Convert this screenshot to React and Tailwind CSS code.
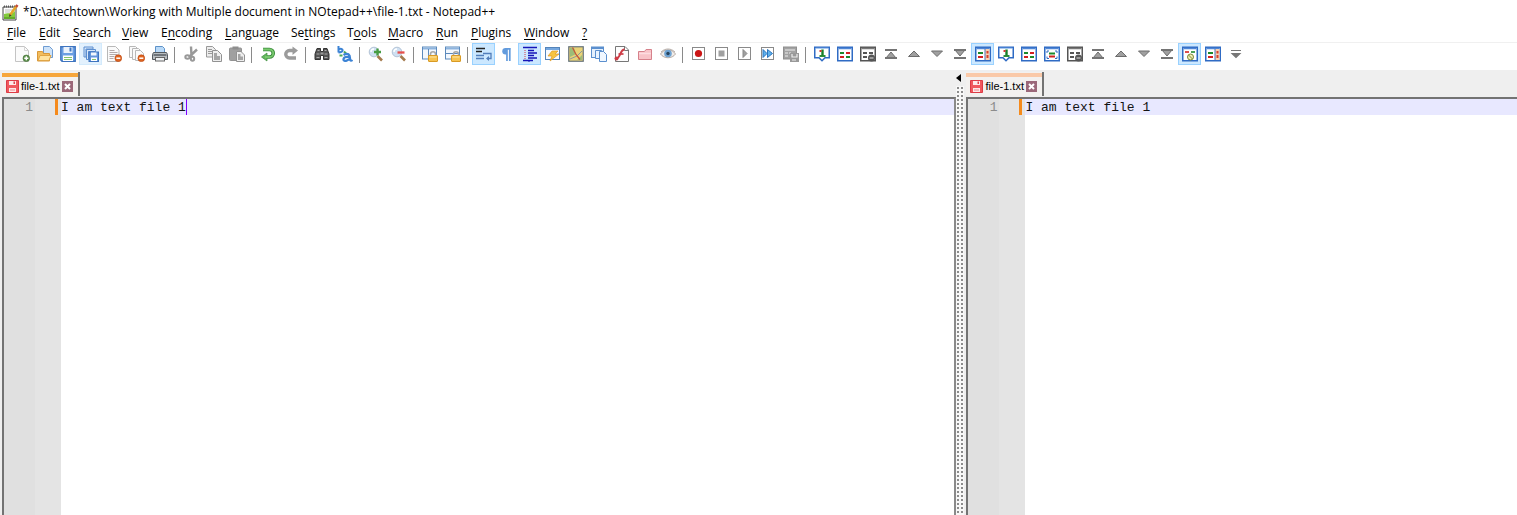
import React from "react";

const Svg = ({ children, size = "size-4" }) => (
  <svg viewBox="0 0 16 16" className={`${size} shrink-0`} aria-hidden="true" fill="none">
    {children}
  </svg>
);

const Minus = () => (
  <>
    <circle cx="12.3" cy="12.2" r="3.4" fill="#df6420" stroke="#b9440f" strokeWidth=".6" />
    <path d="M10.3 12.2h4" stroke="#fff" strokeWidth="1.5" />
  </>
);
const Padlock = () => (
  <>
    <path d="M8.5 10V8.300a2.500 2.500 0 0 1 5 0V10" stroke="#a8a8a8" strokeWidth="1.500" />
    <rect x="6.500" y="9.500" width="9" height="6" rx=".5" fill="#f6c352" stroke="#d99a24" />
    <path d="M7.500 11h7" stroke="#fde6a4" />
  </>
);
const Lens = () => (
  <>
    <path d="M9.500 10l4.500 4.500" stroke="#a57b4e" strokeWidth="2.600" />
    <circle cx="6" cy="6" r="4.800" fill="#cfe0f2" stroke="#b3c3d6" />
    <path d="M3 6a3 3 0 0 1 3-3" stroke="#fff" strokeWidth="1.400" />
  </>
);
const Frame = ({ c = "#2f6bc4", top = "#4f86d6" }) => (
  <>
    <rect x=".75" y="1.250" width="14.500" height="13.500" fill="#fff" stroke={c} strokeWidth="1.500" />
    <path d="M1.500 2.500h13" stroke={top} strokeWidth="1.500" />
  </>
);
const Bars = ({ a = "#1c8a2c", b = "#d32020" }) => (
  <>
    <path d="M3 7h4M9 11h4" stroke={a} strokeWidth="2" />
    <path d="M9 7h4M3 11h4" stroke={b} strokeWidth="2" />
  </>
);
const MediaBox = ({ children }) => (
  <>
    <rect x="1.500" y="1.500" width="12" height="12" fill="#fff" stroke="#8a8a8a" />
    {children}
  </>
);
const Tri = ({ d, line }) => (
  <>
    <path d={d} fill="#a0a0a0" stroke="#6c6c6c" strokeWidth="1" />
    {line && <path d={line} stroke="#747474" strokeWidth="2" />}
  </>
);
const Bookmark = () => (
  <>
    <path d="M.75 1.250h14.500v10.500H11L8 14.800 5 11.750H.75z" fill="#fff" stroke="#2f6bc4" strokeWidth="1.500" />
    <path d="M1.500 2h13" stroke="#5b93de" />
    <path d="M8.500 3.500v6" stroke="#16802a" strokeWidth="2.400" />
    <path d="M5.500 10h6" stroke="#16802a" strokeWidth="1.800" />
    <path d="M5.500 5h2" stroke="#d32020" strokeWidth="1.800" />
  </>
);

const icons = {
  new: (
    <>
      <path d="M1.500.5h9l4 4v11h-13z" fill="#fbfbfb" stroke="#c4c4c4" />
      <path d="M10.500.5v4h4" stroke="#d5d5d5" />
      <circle cx="12.300" cy="12.300" r="3.300" fill="#5c8f4b" stroke="#3f6e33" strokeWidth=".6" />
      <path d="M12.300 10.300v4M10.300 12.300h4" stroke="#fff" strokeWidth="1.400" />
    </>
  ),
  open: (
    <>
      <path d="M6.500.5h6l3 3v8h-9z" fill="#cfe3f8" stroke="#6d9bd2" />
      <path d="M.5 5.500h5l1 2h6v7.500H.5z" fill="#f2bd5e" stroke="#d99838" />
      <path d="M1 14.500l2-5h11l-2 5z" fill="#ffe3a0" stroke="#e0a545" />
    </>
  ),
  save: (
    <>
      <path d="M.75.75h14.500v14.500H2L.75 14z" fill="#6b9fe2" stroke="#3e74bf" strokeWidth="1.300" />
      <rect x="3.500" y="1" width="9" height="6" fill="#eaf2fc" />
      <rect x="9.500" y="1.500" width="2" height="4" fill="#4077c2" />
      <rect x="3" y="9.500" width="10" height="5.500" fill="#fff" />
      <path d="M4 11.500h8M4 13.500h8" stroke="#85c46c" />
    </>
  ),
  saveAll: (
    <>
      <path d="M1 1h9v2H3v8H1z" fill="#d7e7fa" stroke="#5d8fd0" />
      <path d="M3.500 3.500h9v2h-7v8h-2z" fill="#d7e7fa" stroke="#5d8fd0" />
      <rect x="6" y="6" width="9.500" height="9.500" fill="#6496dc" stroke="#3e74bf" />
      <rect x="8" y="6.500" width="5.500" height="3" fill="#f2f7fd" />
      <rect x="8" y="11.500" width="6" height="3.500" fill="#fff" />
      <path d="M9 13.500h4" stroke="#85c46c" />
    </>
  ),
  close: (
    <>
      <path d="M1.500.5h8l3.500 3.500v11.500H1.500z" fill="#fafafa" stroke="#b8b8b8" />
      <path d="M3.500 4.500h5M3.500 6.500h8M3.500 8.500h8M3.500 10.500h5M3.500 12.500h4" stroke="#b4a9a9" />
      <Minus />
    </>
  ),
  closeAll: (
    <>
      <path d="M.5.500h6l2 2v9h-8z" fill="#fafafa" stroke="#b8b8b8" />
      <path d="M3.500 2.500h6l2 2v9h-8z" fill="#fafafa" stroke="#b8b8b8" />
      <path d="M6.500 4.500h5l3 3v7h-8z" fill="#fafafa" stroke="#b8b8b8" />
      <Minus />
    </>
  ),
  print: (
    <>
      <path d="M3.500 7V.5h7l2 2V7" fill="#b9d9f7" stroke="#5e92c8" />
      <path d="M1.500 6.500h13l1 2v5H.5v-5z" fill="#b9bec2" stroke="#555b61" />
      <path d="M1.500 9h13" stroke="#575d63" strokeWidth="1.500" />
      <rect x="3.500" y="11.500" width="9" height="3.500" fill="#f1f4f6" stroke="#666" />
    </>
  ),
  cut: (
    <>
      <path d="M8 .5L8.500 10M14 3.500L6 11" stroke="#999" strokeWidth="2.400" />
      <ellipse cx="4.500" cy="11" rx="2.200" ry="1.700" stroke="#999" strokeWidth="2" />
      <ellipse cx="9.500" cy="12.800" rx="1.700" ry="2" stroke="#999" strokeWidth="2" />
    </>
  ),
  copy: (
    <>
      <path d="M.5.500h6l3 3v7.500h-9z" fill="#ededed" stroke="#999" />
      <path d="M2 3.500h4M2 5.500h5M2 7.500h5" stroke="#999" />
      <path d="M6.500 4.500h5l4 4v7h-9z" fill="#eee" stroke="#929292" />
      <path d="M8 7h3v3h3v4H8z" fill="#a4a4a4" />
    </>
  ),
  paste: (
    <>
      <rect x=".5" y="2" width="12" height="12.500" rx="1" fill="#a0a0a0" stroke="#929292" />
      <rect x="3.500" y=".5" width="6" height="3" fill="#8e8e8e" />
      <path d="M7.500 5.500h4.500l3.500 3.500v6.500h-8z" fill="#eee" stroke="#929292" />
      <path d="M9 8h2.500v2.500H14V14H9z" fill="#a4a4a4" />
    </>
  ),
  undo: (
    <>
      <path d="M3 3.500h6.500a3.600 3.600 0 0 1 0 7.500H6" stroke="#3c8d3d" strokeWidth="3.600" />
      <path d="M7 7v8L1.500 11z" fill="#64b85d" stroke="#3c8d3d" strokeWidth=".7" />
      <path d="M3 3.500h6.500a3.600 3.600 0 0 1 0 7.500H5" stroke="#79c86e" strokeWidth="1.800" />
    </>
  ),
  redo: (
    <>
      <path d="M11 4.500H6.500a3.700 3.700 0 0 0 0 7.500H13" stroke="#9b9b9b" strokeWidth="3.400" />
      <path d="M9.500.5v8.500l5.500-4.500z" fill="#9b9b9b" />
    </>
  ),
  find: (
    <>
      <path d="M3 2.500h3.500v3h3v-3H13l2 5.500v5.500H9.500V9.500h-3v4H1V8z" fill="#555" stroke="#333" />
      <path d="M3.500 4.500h2M10.500 4.500h2M2.500 8h3M10.500 8h3M2.500 11.500h3M10.500 11.500h3" stroke="#aaa" strokeWidth="1.200" />
      <path d="M6.500 7.500h3" stroke="#999" strokeWidth="2" />
    </>
  ),
  replace: (
    <>
      <path d="M1.500 0v6.500M1.500 3.500c5-2.500 6 3 0 3" stroke="#3c83d5" strokeWidth="2" />
      <path d="M2.500 9.500l3 0M7 5.500l3 3" stroke="#4ba757" strokeWidth="2" />
      <path d="M6.500 9c4-2.500 7-1 6.500 4.500 0 1.500 1.500 1.500 2.500.5M12.500 11c-8-1-7 5-3 3.800l3-1.800" stroke="#3c83d5" strokeWidth="2.200" />
    </>
  ),
  zoomIn: (
    <>
      <Lens />
      <path d="M9.500 2.500v7M6 6h7" stroke="#479c43" strokeWidth="2.300" />
    </>
  ),
  zoomOut: (
    <>
      <Lens />
      <path d="M6.500 6.500h7" stroke="#e6504c" strokeWidth="2.300" />
    </>
  ),
  syncV: (
    <>
      <rect x=".5" y="1" width="14" height="12" fill="#f3f8fe" stroke="#5b89bb" />
      <path d="M1 2.500h13" stroke="#8eb4de" strokeWidth="2" />
      <path d="M6.500 3v10" stroke="#5b89bb" />
      <Padlock />
    </>
  ),
  syncH: (
    <>
      <rect x=".5" y="1" width="14" height="12" fill="#f3f8fe" stroke="#5b89bb" />
      <path d="M1 2.500h13" stroke="#8eb4de" strokeWidth="2" />
      <path d="M1 7.500h13" stroke="#5b89bb" />
      <Padlock />
    </>
  ),
  wrap: (
    <>
      <path d="M0 2.500h9M0 5.500h6" stroke="#222" strokeWidth="1.300" />
      <path d="M7 7.500h8v5h-4" stroke="#527ebb" strokeWidth="1.300" />
      <path d="M13 10v5l-3-2.500z" fill="#527ebb" />
      <path d="M0 9.500h8M0 12.500h8" stroke="#527ebb" strokeWidth="1.500" />
    </>
  ),
  pilcrow: (
    <>
      <path d="M12.500 2H7M8.500 2v13M11.500 2v13" stroke="#629bdd" strokeWidth="1.800" />
      <path d="M8.500 1H7a3.500 3.500 0 0 0 0 7h1.500z" fill="#629bdd" />
    </>
  ),
  indent: (
    <>
      <path d="M1 1.500h14M6 4.500h6M6 7h9M6 9.500h6M6 12h9M1 14.500h10" stroke="#1414b8" strokeWidth="1.500" />
      <path d="M3 4v10" stroke="#d23a4c" strokeDasharray="1 1" />
      <path d="M7 14v2" stroke="#1414b8" />
    </>
  ),
  lang: (
    <>
      <rect x=".5" y="1.500" width="14" height="12" fill="#f8fbff" stroke="#5484ba" />
      <path d="M1 3h13" stroke="#76a7de" strokeWidth="2" />
      <path d="M7 5h6l-3 3h4l-9 7 2-5H3z" fill="#f7c441" stroke="#e09b26" strokeWidth=".7" />
    </>
  ),
  map: (
    <>
      <rect x=".75" y=".75" width="14.500" height="14.500" fill="#ead377" stroke="#66737c" strokeWidth="1.200" />
      <path d="M2 2h4l2 6-6 3zM9 14l5-5v5z" fill="#9dbd78" />
      <path d="M2 13l7-3 5-5" stroke="#8b999c" />
      <path d="M4.500 1.500l3.500 7 4 5" stroke="#c65738" strokeWidth="1.300" />
    </>
  ),
  docList: (
    <>
      <rect x=".5" y="1" width="12" height="10.500" fill="#e5f0fc" stroke="#5b8fce" />
      <path d="M1 2h11" stroke="#5b8fce" strokeWidth="2" />
      <path d="M4.500 4.500h6v8h-6z" fill="#e8f3ff" stroke="#5b8fce" />
      <path d="M8.500 5.500h4l3 3v7h-7z" fill="#f0f7ff" stroke="#5b8fce" />
    </>
  ),
  func: (
    <>
      <path d="M1.500.5H11L14.500 4v11.500h-13z" fill="#fdfdfd" stroke="#777" />
      <path d="M10.500.5v4h4" stroke="#777" />
      <path d="M10.500 3.500C6 3 7 12 2 13" stroke="#ce3b45" strokeWidth="2" />
      <path d="M4.500 8h5" stroke="#ce3b45" strokeWidth="1.700" />
      <circle cx="2.500" cy="12.500" r="2" fill="#ce3b45" />
    </>
  ),
  folder: (
    <>
      <path d="M1.500 13.500v-8h6l1.500-2h5.500v10z" fill="#f8c3c8" stroke="#d6818b" />
      <path d="M2 7.500h12" stroke="#fddce0" strokeWidth="1.500" />
    </>
  ),
  eye: (
    <>
      <path d="M.5 8C4 2.500 12 2.500 15.500 8 12 13 4 13 .5 8z" fill="#f1ece8" stroke="#b5aaa3" />
      <circle cx="8" cy="7.500" r="3.800" fill="#6fa3d2" />
      <circle cx="8" cy="7.500" r="1.700" fill="#27435c" />
      <path d="M1 6c4-4 10-4 14 0" stroke="#b9b0aa" />
    </>
  ),
  record: <MediaBox><circle cx="7.500" cy="7.500" r="3.600" fill="#cb1515" /></MediaBox>,
  stop: <MediaBox><rect x="4.500" y="4.500" width="6" height="6" fill="#a0a0a0" /></MediaBox>,
  play: <MediaBox><path d="M6 3.500v8l4-4z" fill="#a0a0a0" stroke="#888" /></MediaBox>,
  fast: <MediaBox><path d="M3 3.500v8l4-4zM7.500 3.500v8l5-4z" fill="#5eb2ed" stroke="#2c74bd" /></MediaBox>,
  saveMacro: (
    <>
      <rect x=".5" y="1" width="13" height="12" fill="#a3a3a3" stroke="#8f8f8f" />
      <path d="M2 4h10M2 7h3m1 0h2M2 10h3" stroke="#eee" strokeWidth="1.200" />
      <rect x="7" y="7" width="9" height="9" fill="#999" />
      <path d="M9 8v3h5V8M9 14h4" stroke="#eee" strokeWidth="1.200" />
    </>
  ),
  bookmark: <Bookmark />,
  diff: <><Frame /><Bars /></>,
  diffGray: (
    <>
      <Frame c="#555" top="#777" />
      <Bars a="#555" b="#555" />
      <circle cx="11.500" cy="12" r="3.500" fill="#555" />
      <path d="M9.500 12h4" stroke="#ccc" strokeWidth="1.200" />
    </>
  ),
  first: <Tri d="M3 12h10L8 6z" line="M2 4h12M2 12h12" />,
  prev: <Tri d="M2.500 10.500h11L8 5z" />,
  next: <Tri d="M2.500 5h11L8 10.500z" />,
  last: <Tri d="M3 4h10L8 10z" line="M2 4h12M2 12h12" />,
  nav: (
    <>
      <Frame />
      <path d="M3 7h5" stroke="#1c8a2c" strokeWidth="2" />
      <path d="M3 11h5" stroke="#d32020" strokeWidth="2" />
      <rect x="10" y="3" width="4.500" height="11" fill="#f7d0b0" />
      <path d="M10 3v11" stroke="#4a78bb" />
      <path d="M12.500 5v2.500M12.500 9v3" stroke="#d6432d" strokeWidth="2" />
    </>
  ),
  capture: (
    <>
      <Frame />
      <path d="M5 5H3v2M11 5h2v2M5 12.500H3v-2M11 12.500h2v-2" stroke="#2f6bc4" />
      <path d="M5 7.500h6" stroke="#1c8a2c" strokeWidth="2" />
      <path d="M5 10.500h6" stroke="#d32020" strokeWidth="2" />
    </>
  ),
  ignore: (
    <>
      <Frame />
      <path d="M3 6h4" stroke="#d32020" strokeWidth="1.600" />
      <path d="M9 6h4" stroke="#1c8a2c" strokeWidth="1.600" />
      <circle cx="8.500" cy="11" r="3" fill="#f0edb5" stroke="#7d8b36" />
      <path d="M6.500 9l4 4" stroke="#7d8b36" />
    </>
  ),
  chevron: <path d="M3 4.500h10M4 7.500h8l-4 4z" fill="#777" stroke="#777" strokeWidth="1.200" />,
};

const groups = [
  [["new", "New"], ["open", "Open"], ["save", "Save"], ["saveAll", "Save All", "hover"], ["close", "Close"], ["closeAll", "Close All"], ["print", "Print"]],
  [["cut", "Cut"], ["copy", "Copy"], ["paste", "Paste"]],
  [["undo", "Undo"], ["redo", "Redo"]],
  [["find", "Find"], ["replace", "Replace"]],
  [["zoomIn", "Zoom In"], ["zoomOut", "Zoom Out"]],
  [["syncV", "Synchronize Vertical Scrolling"], ["syncH", "Synchronize Horizontal Scrolling"]],
  [["wrap", "Word wrap", "on"], ["pilcrow", "Show All Characters"], ["indent", "Show Indent Guide", "on"], ["lang", "Define your language"], ["map", "Document Map"], ["docList", "Document List"], ["func", "Function List"], ["folder", "Folder as Workspace"], ["eye", "Monitoring"]],
  [["record", "Start Recording"], ["stop", "Stop Recording"], ["play", "Playback"], ["fast", "Run a Macro Multiple Times"], ["saveMacro", "Save Recorded Macro"]],
  [["bookmark", "Set as First to Compare"], ["diff", "Compare"], ["diffGray", "Clear Active Compare"], ["first", "First Block"], ["prev", "Previous Block"], ["next", "Next Block"], ["last", "Last Block"], ["nav", "Navigation Bar", "on"], ["bookmark", "Set First"], ["diff", "Compare Files"], ["capture", "Compare Selections"], ["diffGray", "Clear Compare"], ["first", "First Difference"], ["prev", "Previous Difference"], ["next", "Next Difference"], ["last", "Last Difference"], ["ignore", "Ignore Spaces", "on"], ["nav", "Show Navigation Bar"], ["chevron", "More"]],
];

const menus = [
  ["", "F", "ile"], ["", "E", "dit"], ["", "S", "earch"], ["", "V", "iew"], ["E", "n", "coding"],
  ["", "L", "anguage"], ["Se", "t", "tings"], ["T", "o", "ols"], ["", "M", "acro"], ["", "R", "un"],
  ["", "P", "lugins"], ["", "W", "indow"], ["", "?", ""],
];

const stateClass = {
  on: "border-[#99d1ff] bg-[#cce8ff]",
  hover: "border-[#d3eafc] bg-[#e3f1fd]",
};

function Tab({ active }) {
  return (
    <div className="flex h-6 w-[78px] flex-col border-r-2 border-[#737373] bg-[#f3f1ef]">
      <div className={`mt-px h-1 shrink-0 ${active ? "bg-[#f6a63c]" : "bg-[#fac9a8]"}`} />
      <div className="flex flex-1 items-center gap-0.5 pb-px pl-1">
        <svg viewBox="0 0 13 13" className="size-[13px] shrink-0" aria-hidden="true">
          <path d="M.5.500h12v12h-12z" fill="#f0595e" stroke="#dc3c46" />
          <path d="M3 1h7v4H3zM3 8h7v4H3z" fill="#fde9e9" />
          <path d="M7.500 1.500h1.500v2.500H7.500z" fill="#e1434b" />
          <path d="M4 10h5" stroke="#ef8589" />
        </svg>
        <button className="whitespace-nowrap text-left text-[11px] leading-4 text-black">
          file-1.txt
        </button>
        <button aria-label="Close tab" className="shrink-0">
          <svg viewBox="0 0 11 11" className="size-[11px]">
            <path d="M0 0h11v11H0z" fill="#9b6879" />
            <path d="M3 3l5 5M8 3l-5 5" stroke="#fff" strokeWidth="2" />
          </svg>
        </button>
      </div>
    </div>
  );
}

function Pane({ active, label }) {
  return (
    <section className="flex min-w-0 flex-1 flex-col">
      <div className="flex h-[27px] items-start pt-0.5">
        <Tab active={active} />
      </div>
      <div className={`flex flex-1 border-l-2 border-t-2 border-[#737373] bg-white font-['Liberation_Mono',monospace] text-[13px] leading-4 ${active ? "border-r-2 border-r-[#8a8a8a]" : ""}`}>
        <div className="flex w-[57px] shrink-0 bg-[#e4e4e4]">
          <span className="w-[31px] bg-[#e0e0e0] pr-0.5 pt-px text-right text-[#8c8c8c]">1</span>
          <span className="ml-5 h-4 w-[3px] bg-[#f58a1c]" />
        </div>
        <div className="relative min-w-0 flex-1">
          <textarea
            aria-label={label}
            defaultValue="I am text file 1"
            spellCheck={false}
            rows={1}
            className="block h-4 w-full resize-none overflow-hidden bg-[#e8e8ff] pt-px leading-4 text-[#141414] outline-none"
          />
          {active && <span className="absolute left-[16ch] top-0 h-4 w-px bg-[#8000ff]" />}
        </div>
      </div>
    </section>
  );
}

export default function App() {
  return (
    <div className="flex min-h-screen flex-col bg-white font-['Liberation_Sans',sans-serif]">
      <header className="flex h-6 items-center gap-1 pl-0.5">
        <svg viewBox="0 0 17 17" className="size-[17px] shrink-0" aria-hidden="true">
          <path d="M1 3h13v13H1z" fill="#fff" stroke="#454545" />
          <path d="M2 10c4-2 7 1 11-3v8H2z" fill="#83ca3d" />
          <path d="M2 13h11v2H2z" fill="#63ad2a" />
          <path d="M3 6h8M3 8h5" stroke="#bbb" />
          <path d="M2 2.500h11" stroke="#555" strokeWidth="2" strokeDasharray="1 1" />
          <path d="M8 11l6.500-9" stroke="#e5a629" strokeWidth="2.500" />
          <path d="M14 3l1.500-2" stroke="#c44b39" strokeWidth="2.500" />
          <path d="M7 13l.5-3 2 1.500z" fill="#4a3c26" />
        </svg>
        <h1 className="whitespace-nowrap font-['Open_Sans',sans-serif] text-[12px] leading-4 text-black">
          *D:\atechtown\Working with Multiple document in NOtepad++\file-1.txt - Notepad++
        </h1>
      </header>
      <nav className="grid h-[18px] grid-cols-[32px_34px_49px_39px_64px_66px_56px_41px_48px_35px_53px_58px_20px] items-center pl-[7px] font-['Open_Sans',sans-serif] text-[12px] leading-4 text-black">
        {menus.map(([a, b, c]) => (
          <button key={a + b + c} className="whitespace-nowrap text-left">
            {a}
            <span className="underline underline-offset-2">{b}</span>
            {c}
          </button>
        ))}
      </nav>
      <div role="toolbar" aria-label="Main toolbar" className="flex h-7 items-start border-t border-[#f0f0f0] pl-2.5">
        {groups.map((group, i) => (
          <React.Fragment key={i}>
            {i > 0 && <span className="mr-1 ml-[3px] mt-1 h-4 w-px bg-[#8a8a8a]" />}
            {group.map(([name, label, state]) => (
              <button
                key={label}
                aria-label={label}
                className={`flex h-[22px] w-[23px] shrink-0 items-center justify-center border ${state ? stateClass[state] : "border-transparent"}`}
              >
                <Svg size={name === "pilcrow" ? "size-[15px]" : "size-4"}>{icons[name]}</Svg>
              </button>
            ))}
          </React.Fragment>
        ))}
      </div>
      <main className="flex flex-1 bg-[#efefef] pl-0.5">
        <div className="flex shrink-0 basis-[63%]">
          <Pane active label="file-1.txt, main view" />
        </div>
        <div className="flex w-[10px] shrink-0 flex-col items-start pt-1">
          <svg viewBox="0 0 5 8" className="h-2 w-[5px]" aria-hidden="true">
            <path d="M5 0v8L0 4z" fill="#000" />
          </svg>
          <div className="mt-1 w-2 flex-1 bg-[radial-gradient(#8c8c8c_1px,#f8f8f8_1px)] bg-size-[4px_4px]" />
        </div>
        <Pane label="file-1.txt, second view" />
      </main>
    </div>
  );
}
